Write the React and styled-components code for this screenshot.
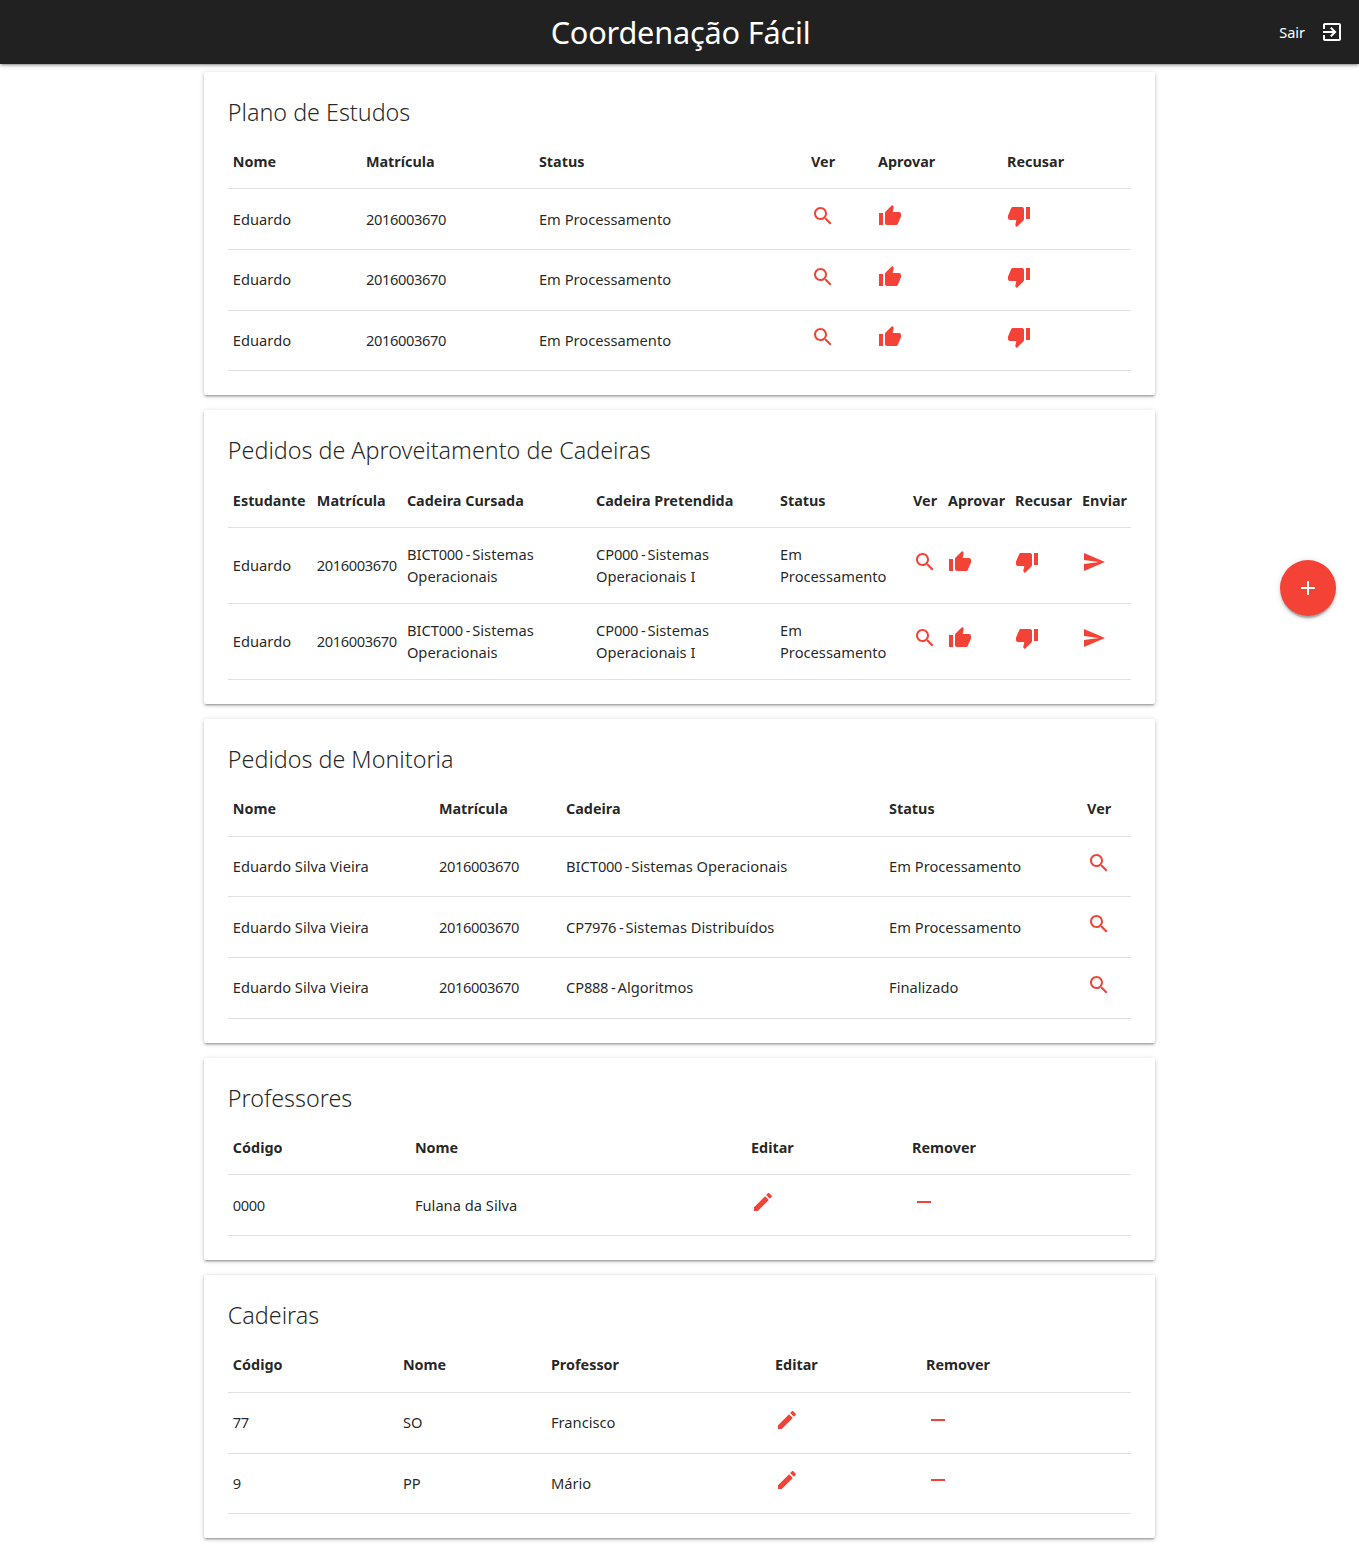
import React from 'react';
import styled, { createGlobalStyle } from 'styled-components';

const GlobalStyle = createGlobalStyle`
  html { font-size: 15px; }
  body {
    margin: 0;
    background: #fff;
    font-family: "Noto Sans", "Open Sans", sans-serif;
    font-size: 15px;
    line-height: 1.5;
    color: rgba(0, 0, 0, 0.87);
  }
`;

const Navbar = styled.nav`
  display: grid;
  grid-template-columns: 1fr auto 1fr;
  align-items: center;
  height: 64px;
  background: #212121;
  color: #fff;
  box-shadow: 0 2px 2px 0 rgba(0,0,0,.14), 0 3px 1px -2px rgba(0,0,0,.12), 0 1px 5px 0 rgba(0,0,0,.2);
`;

const Brand = styled.div`
  grid-column: 2;
  font-size: 30.7px;
  line-height: 64px;
  letter-spacing: -0.2px;
  padding-left: 2px;
`;

const Logout = styled.div`
  justify-self: end;
  display: flex;
  align-items: center;
  gap: 15px;
  padding-right: 15px;
  font-size: 14.5px;
`;

const LogoutLabel = styled.span`
  padding-top: 2px;
`;

const Container = styled.main`
  width: 70%;
  margin: 0 auto;
`;

const Card = styled.section`
  margin: 7.5px 0 15px;
  padding: 24px;
  background: #fff;
  border-radius: 2px;
  box-shadow: 0 2px 2px 0 rgba(0,0,0,.14), 0 3px 1px -2px rgba(0,0,0,.12), 0 1px 5px 0 rgba(0,0,0,.2);
`;

const CardTitle = styled.h2`
  margin: 0 0 8px;
  font-size: 23.3px;
  font-weight: 300;
  line-height: 32px;
`;

const Table = styled.table`
  width: 100%;
  table-layout: fixed;
  border-collapse: collapse;
`;

const Row = styled.tr`
  border-bottom: 1px solid #e0e0e0;
`;

const Th = styled.th`
  padding: 15.4px 5px 14.6px;
  text-align: left;
  font-size: 14.4px;
  font-weight: 700;
  line-height: 22.8px;
  white-space: nowrap;
`;

const Td = styled.td`
  padding: 14.7px 5px 15.3px;
  font-size: 14.7px;
  line-height: 22.5px;
  white-space: nowrap;
`;

// the digits run narrower than the letters in the reference
const Digits = styled.span`
  letter-spacing: -0.4px;
`;

const Dash = styled.span`
  letter-spacing: -1px;
`;

const IconSlot = styled.div`
  height: 29.67px;
`;

const Svg = styled.svg`
  display: block;
  width: 24px;
  height: 24px;
  fill: ${p => p.$color || '#f44336'};
`;

const Fab = styled.button`
  position: fixed;
  top: 560px;
  right: 23px;
  width: 56px;
  height: 56px;
  padding: 16px;
  border: 0;
  border-radius: 50%;
  background: #f44336;
  box-shadow: 0 3px 3px 0 rgba(0,0,0,.14), 0 1px 7px 0 rgba(0,0,0,.12), 0 3px 1px -1px rgba(0,0,0,.2);
`;

const paths = {
  search: 'M15.5 14h-.79l-.28-.27C15.41 12.59 16 11.11 16 9.5 16 5.91 13.09 3 9.5 3S3 5.91 3 9.5 5.91 16 9.5 16c1.61 0 3.09-.59 4.23-1.57l.27.28v.79l5 4.99L20.49 19l-4.99-5zm-6 0C7.01 14 5 11.99 5 9.5S7.01 5 9.5 5 14 7.01 14 9.5 11.99 14 9.5 14z',
  up: 'M1 21h4V9H1v12zm22-11c0-1.1-.9-2-2-2h-6.31l.95-4.57.03-.32c0-.41-.17-.79-.44-1.06L14.17 1 7.59 7.59C7.22 7.95 7 8.45 7 9v10c0 1.1.9 2 2 2h9c.83 0 1.54-.5 1.84-1.22l3.02-7.05c.09-.23.14-.47.14-.73v-1.91l-.01-.01L23 10z',
  down: 'M15 3H6c-.83 0-1.54.5-1.84 1.22l-3.02 7.05c-.09.23-.14.47-.14.73v1.91l.01.01L1 14c0 1.1.9 2 2 2h6.31l-.95 4.57-.03.32c0 .41.17.79.44 1.06L9.83 23l6.59-6.59c.36-.36.58-.86.58-1.41V5c0-1.1-.9-2-2-2zm4 0v12h4V3h-4z',
  send: 'M2.01 21L23 12 2.01 3 2 10l15 2-15 2z',
  edit: 'M3 17.25V21h3.75L17.81 9.94l-3.75-3.75L3 17.25zM20.71 7.04c.39-.39.39-1.02 0-1.41l-2.34-2.34c-.39-.39-1.02-.39-1.41 0l-1.83 1.83 3.75 3.75 1.83-1.83z',
  remove: 'M19 13H5v-2h14v2z',
  add: 'M19 13h-6v6h-2v-6H5v-2h6V5h2v6h6v2z',
  exit: 'M10.09 15.59L11.5 17l5-5-5-5-1.41 1.41L12.67 11H3v2h9.67l-2.58 2.59zM19 3H5c-1.11 0-2 .9-2 2v4h2V5h14v14H5v-4H3v4c0 1.1.89 2 2 2h14c1.1 0 2-.9 2-2V5c0-1.1-.9-2-2-2z',
};

const Icon = ({ name, color }) => (
  <Svg viewBox="0 0 24 24" $color={color}>
    <path d={paths[name]} />
  </Svg>
);

const cellText = text =>
  text.split(/(\d+| - )/).map((part, i) => {
    if (part === ' - ') return <Dash key={i}>{part}</Dash>;
    return i % 2 ? <Digits key={i}>{part}</Digits> : part;
  });

const cellContent = cell => {
  if (cell.icon) {
    return (
      <IconSlot>
        <Icon name={cell.icon} />
      </IconSlot>
    );
  }
  if (Array.isArray(cell)) {
    return cell.map((line, i) => (
      <React.Fragment key={i}>
        {i > 0 && <br />}
        {cellText(line)}
      </React.Fragment>
    ));
  }
  return cellText(cell);
};

const DataCard = ({ title, cols, head, rows }) => (
  <Card>
    <CardTitle>{title}</CardTitle>
    <Table>
      <colgroup>
        {cols.map((w, i) => <col key={i} width={w} />)}
      </colgroup>
      <thead>
        <Row>{head.map(h => <Th key={h}>{h}</Th>)}</Row>
      </thead>
      <tbody>
        {rows.map((row, i) => (
          <Row key={i}>
            {row.map((cell, j) => <Td key={j}>{cellContent(cell)}</Td>)}
          </Row>
        ))}
      </tbody>
    </Table>
  </Card>
);

const ver = { icon: 'search' };
const up = { icon: 'up' };
const down = { icon: 'down' };
const send = { icon: 'send' };
const edit = { icon: 'edit' };
const remove = { icon: 'remove' };

const planoRow = ['Eduardo', '2016003670', 'Em Processamento', ver, up, down];
const pedidoRow = [
  'Eduardo',
  '2016003670',
  ['BICT000 - Sistemas', 'Operacionais'],
  ['CP000 - Sistemas', 'Operacionais I'],
  ['Em', 'Processamento'],
  ver, up, down, send,
];

export default function App() {
  return (
    <>
      <GlobalStyle />
      <Navbar>
        <Brand>Coordenação Fácil</Brand>
        <Logout>
          <LogoutLabel>Sair</LogoutLabel>
          <Icon name="exit" color="#fff" />
        </Logout>
      </Navbar>
      <Container>
        <DataCard
          title="Plano de Estudos"
          cols={[133, 173, 272, 67, 129, 129]}
          head={['Nome', 'Matrícula', 'Status', 'Ver', 'Aprovar', 'Recusar']}
          rows={[planoRow, planoRow, planoRow]}
        />
        <DataCard
          title="Pedidos de Aproveitamento de Cadeiras"
          cols={[84, 90, 189, 184, 133, 35, 67, 67, 54]}
          head={['Estudante', 'Matrícula', 'Cadeira Cursada', 'Cadeira Pretendida', 'Status', 'Ver', 'Aprovar', 'Recusar', 'Enviar']}
          rows={[pedidoRow, pedidoRow]}
        />
        <DataCard
          title="Pedidos de Monitoria"
          cols={[206, 127, 323, 198, 49]}
          head={['Nome', 'Matrícula', 'Cadeira', 'Status', 'Ver']}
          rows={[
            ['Eduardo Silva Vieira', '2016003670', 'BICT000 - Sistemas Operacionais', 'Em Processamento', ver],
            ['Eduardo Silva Vieira', '2016003670', 'CP7976 - Sistemas Distribuídos', 'Em Processamento', ver],
            ['Eduardo Silva Vieira', '2016003670', 'CP888 - Algoritmos', 'Finalizado', ver],
          ]}
        />
        <DataCard
          title="Professores"
          cols={[182, 336, 161, 224]}
          head={['Código', 'Nome', 'Editar', 'Remover']}
          rows={[['0000', 'Fulana da Silva', edit, remove]]}
        />
        <DataCard
          title="Cadeiras"
          cols={[170, 148, 224, 151, 210]}
          head={['Código', 'Nome', 'Professor', 'Editar', 'Remover']}
          rows={[
            ['77', 'SO', 'Francisco', edit, remove],
            ['9', 'PP', 'Mário', edit, remove],
          ]}
        />
      </Container>
      <Fab>
        <Icon name="add" color="#fff" />
      </Fab>
    </>
  );
}
